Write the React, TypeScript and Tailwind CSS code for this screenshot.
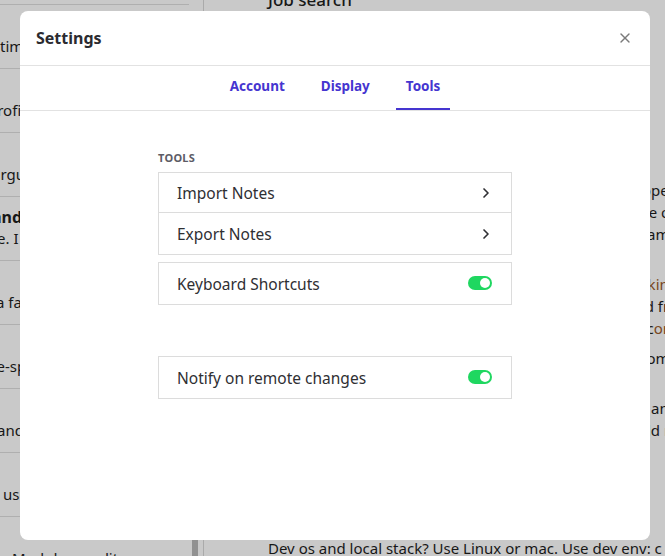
import { ChevronRight, X } from "lucide-react";

const sidebarItems = [
  { preview: "", shift: 0 },
  { preview: "time to reply", shift: 0 },
  { preview: "profile links", shift: -12 },
  { preview: "argument", shift: -8 },
  { title: "and f", preview: "e. I will", shift: -3 },
  { preview: "a fat list", shift: -4 },
  { preview: "use-space", shift: -20 },
  { preview: "and later", shift: -3 },
  { preview: "users", shift: 3 },
  { preview: "Markdown editor", shift: 12 },
];

const tabs = ["Account", "Display", "Tools"];

function Toggle() {
  return (
    <span className="flex h-[14px] w-6 items-center justify-end rounded-full bg-[#1fd760] pr-[2px]">
      <span className="h-[10px] w-[10px] rounded-full bg-white" />
    </span>
  );
}

function Row({ label, right, h = "h-[41px]" }: { label: string; right: "chevron" | "toggle"; h?: string }) {
  return (
    <div className={`flex ${h} items-center justify-between pl-[18px] pr-[19px]`}>
      <span className="pt-[3px] text-[15.5px] text-[#2f2f33]">{label}</span>
      {right === "chevron" ? (
        <ChevronRight className="-mr-[2px] mt-[1px] h-4 w-4 text-[#2f2f33]" strokeWidth={2.5} />
      ) : (
        <Toggle />
      )}
    </div>
  );
}

export default function App() {
  return (
    <div
      className="relative flex h-screen w-full overflow-hidden bg-white text-[#1e1e1e]"
      style={{ fontFamily: '"Noto Sans", "Open Sans", sans-serif' }}
    >
      {/* Sidebar behind the dialog */}
      <div className="flex w-[204px] shrink-0 border-r border-[#d8d8d8]">
        <div className="mt-[-59px] w-[190px] overflow-hidden">
          {sidebarItems.map((item, i) => (
            <div key={i} className="flex h-16 flex-col justify-end border-b border-[#dedede] pb-[11px]">
              {item.title && (
                <div className="text-[16px] font-bold leading-[21px] whitespace-nowrap" style={{ marginLeft: -8 }}>
                  {item.title}
                </div>
              )}
              <div className="text-[15px] leading-[21px] whitespace-nowrap" style={{ marginLeft: item.shift }}>
                {item.preview}
              </div>
            </div>
          ))}
        </div>
        <div className="flex w-[14px] flex-col justify-end pl-[3px]">
          <div className="h-[36px] w-[6px] bg-[#b9b9b9]" />
        </div>
      </div>

      {/* Note content behind the dialog */}
      <div className="flex flex-1 flex-col pl-16 text-[15px] leading-[22px]">
        <div className="mt-[-11px] text-[17px] font-medium">Job search</div>
        <div className="mt-[168px] flex w-[410px] flex-col items-end whitespace-nowrap">
          <div>Keep a short list of companies, not a list of places that happen</div>
          <div>to be hiring. Reach out to a friend, a former colleague or,</div>
          <div>failing that, a recruiter who knows the team by name</div>
          <div className="mt-7">Start each morning by reading the hiring thread, lo<span className="text-[#9a5a2a]">oking</span></div>
          <div>at roles from companies I already admire, and fro</div>
          <div>writing a short note for each, keeping a rec<span className="text-[#9a5a2a]">ord</span></div>
          <div className="mt-2">of every reply so that nothing slips, and some</div>
          <div className="mt-7">Prepare for interviews with a partner and</div>
          <div>record the answers to review later, old m</div>
        </div>
        <div className="mt-auto mb-[-3px] whitespace-nowrap">Dev os and local stack? Use Linux or mac. Use dev env: c</div>
      </div>

      {/* Dim overlay */}
      <div className="absolute inset-0 bg-black/[0.21]" />

      {/* Settings dialog */}
      <div className="absolute inset-0 flex items-start">
        <div className="ml-5 mt-[11px] flex h-[529px] w-[630px] flex-col rounded-lg bg-white">
          <div className="flex h-[55px] items-center justify-between border-b border-[#e2e2e2] pl-4 pr-[17px]">
            <h2 className="text-[16px] font-bold text-[#2b2b30]">Settings</h2>
            <X className="h-4 w-4 text-[#7a7a7a]" strokeWidth={2} />
          </div>

          <div className="flex h-[45px] justify-center gap-4 border-b border-[#e2e2e2]">
            {tabs.map((tab) => (
              <div
                key={tab}
                className={
                  tab === "Tools"
                    ? "flex items-center border-b-2 border-[#4535d0] px-[10px] pb-[2px] text-[13.5px] font-bold text-[#4535d0]"
                    : "flex items-center border-b-2 border-transparent px-[10px] pb-[2px] text-[13.5px] font-bold text-[#4535d0]"
                }
              >
                {tab}
              </div>
            ))}
          </div>

          <div className="mx-auto mt-[39px] w-[354px]">
            <div className="mb-[5px] text-[11px] font-bold tracking-wide text-[#5c5c66]">TOOLS</div>
            <div className="divide-y divide-[#dcdcdc] border border-[#dcdcdc]">
              <Row label="Import Notes" right="chevron" h="h-10" />
              <Row label="Export Notes" right="chevron" />
            </div>
            <div className="mt-[7px] border border-[#dcdcdc]">
              <Row label="Keyboard Shortcuts" right="toggle" />
            </div>
            <div className="mt-[51px] border border-[#dcdcdc]">
              <Row label="Notify on remote changes" right="toggle" />
            </div>
          </div>
        </div>
      </div>
    </div>
  );
}
